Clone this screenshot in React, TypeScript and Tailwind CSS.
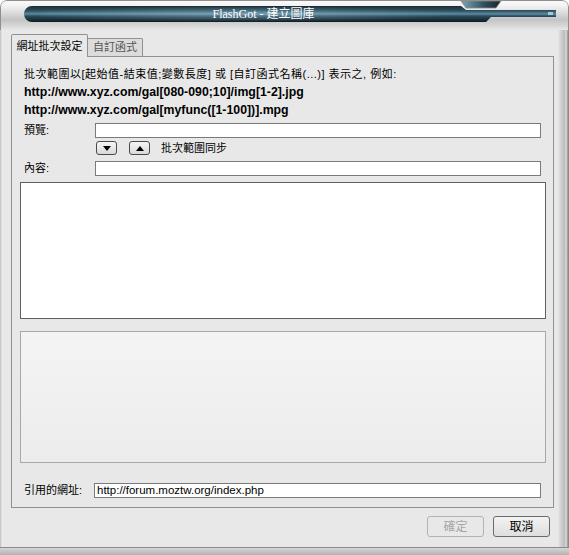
import React from "react";

const TitleBar = () => (
  <div className="relative h-[30px] shrink-0">
    <svg className="absolute inset-0" width="569" height="30" viewBox="0 0 569 30">
      <defs>
        <linearGradient id="frame" x1="0" y1="0" x2="0" y2="1">
          <stop offset="0" stopColor="#fbfbfb" />
          <stop offset="0.2" stopColor="#f1f1f1" />
          <stop offset="0.65" stopColor="#c4c4c4" />
          <stop offset="0.85" stopColor="#d6d6d6" />
          <stop offset="1" stopColor="#e8e8e8" />
        </linearGradient>
        <linearGradient id="bar" x1="0" y1="0" x2="0" y2="1">
          <stop offset="0" stopColor="#1a2b33" />
          <stop offset="0.3" stopColor="#2d5060" />
          <stop offset="0.5" stopColor="#5f8ba0" />
          <stop offset="0.62" stopColor="#2c4e5e" />
          <stop offset="1" stopColor="#0e1a20" />
        </linearGradient>
        <radialGradient id="glow" cx="0.45" cy="0.5" r="0.5">
          <stop offset="0" stopColor="#9cc4d4" stopOpacity="0.45" />
          <stop offset="1" stopColor="#9cc4d4" stopOpacity="0" />
        </radialGradient>
        <linearGradient id="notch" x1="0" y1="0" x2="1" y2="0">
          <stop offset="0" stopColor="#7aa6ba" />
          <stop offset="0.6" stopColor="#2e4c5a" />
          <stop offset="1" stopColor="#16252c" />
        </linearGradient>
      </defs>
      <path
        d="M0.5,30 V7 Q0.5,0.5 7,0.5 H562 Q568.5,0.5 568.5,7 V30"
        fill="url(#frame)"
        stroke="#8f8f8f"
      />
      <path d="M461,1 H501 L496,8 H466 Z" fill="url(#notch)" stroke="#8a8a8a" strokeWidth="0.8" />
      <path d="M32,6 H461 L466,10 H556 V17 H491 L486,22 H32 A8,8 0 0 1 32,6 Z" fill="url(#bar)" />
      <rect x="40" y="6" width="440" height="16" fill="url(#glow)" />
      <rect x="548" y="12" width="5" height="3" fill="#a7c7d3" />
    </svg>
    <div className="relative flex h-[28px] items-center justify-center pr-[42px]">
      <span className="font-['Liberation_Serif','Noto_Sans_CJK_TC',serif] text-[12px] text-white">
        FlashGot - 建立圖庫
      </span>
    </div>
  </div>
);

const Field = ({ label, value, labelWidth }: { label: string; value?: string; labelWidth: string }) => (
  <div className="flex h-[15px] items-center pl-[4px] pr-[5px]">
    <span className={labelWidth}>{label}</span>
    <div className="flex h-[15px] flex-1 items-center border border-[#7a7a7a] bg-white pl-[2px] font-['Liberation_Sans',sans-serif] text-[11.5px] leading-none">
      {value}
    </div>
  </div>
);

const Arrow = ({ up }: { up?: boolean }) => (
  <button className="flex h-[14px] w-[21px] items-center justify-center rounded-[3px] border border-[#4a4a4a] bg-linear-to-b from-[#f6f6f6] to-[#d9d9d9]">
    <svg width="8" height="5" viewBox="0 0 8 5">
      <polygon points={up ? "0,5 8,5 4,0" : "0,0 8,0 4,5"} fill="#000" />
    </svg>
  </button>
);

const Panel = () => (
  <div className="ml-[8px] mr-[4px] flex h-[452px] flex-col border border-[#919191] pt-[8px] pl-[8px] pr-[7px]">
    <div className="pl-[4px] leading-[18px]">
      <div className="tracking-[0.5px]">批次範圍以[起始值-結束值;變數長度] 或 [自訂函式名稱(...)] 表示之, 例如:</div>
      <div className="font-['Liberation_Sans',sans-serif] text-[12.3px] font-bold">
        http://www.xyz.com/gal[080-090;10]/img[1-2].jpg
      </div>
      <div className="font-['Liberation_Sans',sans-serif] text-[12.3px] font-bold">
        http://www.xyz.com/gal[myfunc([1-100])].mpg
      </div>
    </div>
    <div className="mt-[4px]">
      <Field label="預覽:" labelWidth="w-[71px]" />
    </div>
    <div className="mt-[3px] flex h-[14px] items-center pl-[76px]">
      <Arrow />
      <div className="ml-[12px]">
        <Arrow up />
      </div>
      <span className="ml-[11px]">批次範圍同步</span>
    </div>
    <div className="mt-[6px]">
      <Field label="內容:" labelWidth="w-[71px]" />
    </div>
    <div className="mt-[6px] h-[137px] border border-[#5f5f5f] bg-white" />
    <div className="mt-[12px] h-[132px] border border-[#a8a8a8] bg-linear-to-b from-[#f4f4f4] to-[#ececec]" />
    <div className="mt-[20px]">
      <Field label="引用的網址:" value="http://forum.moztw.org/index.php" labelWidth="w-[70px]" />
    </div>
  </div>
);

export default function App() {
  return (
    <div className="flex h-[555px] w-[569px] flex-col overflow-hidden rounded-t-[7px] bg-[#e8e8e8] font-['Liberation_Sans','Noto_Sans_CJK_TC',sans-serif] text-[11px] text-black">
      <TitleBar />
      <div className="flex flex-1">
        <div className="w-[3px] bg-linear-to-r from-[#c2c2c2] to-[#f4f4f4]" />
        <div className="flex flex-1 flex-col">
          <div className="mt-[4px] ml-[8px] flex items-end">
            <div className="relative z-10 -mb-px flex h-[23px] w-[77px] justify-center rounded-t-[2px] border border-b-0 border-[#919191] bg-[#e8e8e8] pt-[4px] leading-[14px]">
              網址批次設定
            </div>
            <div className="flex h-[18px] w-[55px] items-center justify-center rounded-tr-[2px] border-t border-r border-[#919191] bg-[#dcdcdc] text-[#555]">
              自訂函式
            </div>
          </div>
          <Panel />
          <div className="mt-[8px] flex justify-end gap-[9px] pr-[8px] text-[12px]">
            <button className="h-[21px] w-[57px] rounded-[3px] border border-[#b3b3b3] bg-[#e8e8e8] text-[#a6a6a6]">
              確定
            </button>
            <button className="h-[21px] w-[57px] rounded-[3px] border border-[#6a6a6a] bg-linear-to-b from-[#f3f3f3] to-[#dedede]">
              取消
            </button>
          </div>
        </div>
        <div className="w-[11px] bg-[linear-gradient(to_right,#e6e6e6_0,#cbcbcb_35%,#bdbdbd_60%,#dedede_72%,#a9a9a9_85%,#7f7f7f_100%)]" />
      </div>
      <div className="h-[8px] border-t border-[#8a8a8a] bg-linear-to-b from-[#d6d6d6] to-[#b2b2b2]" />
    </div>
  );
}
